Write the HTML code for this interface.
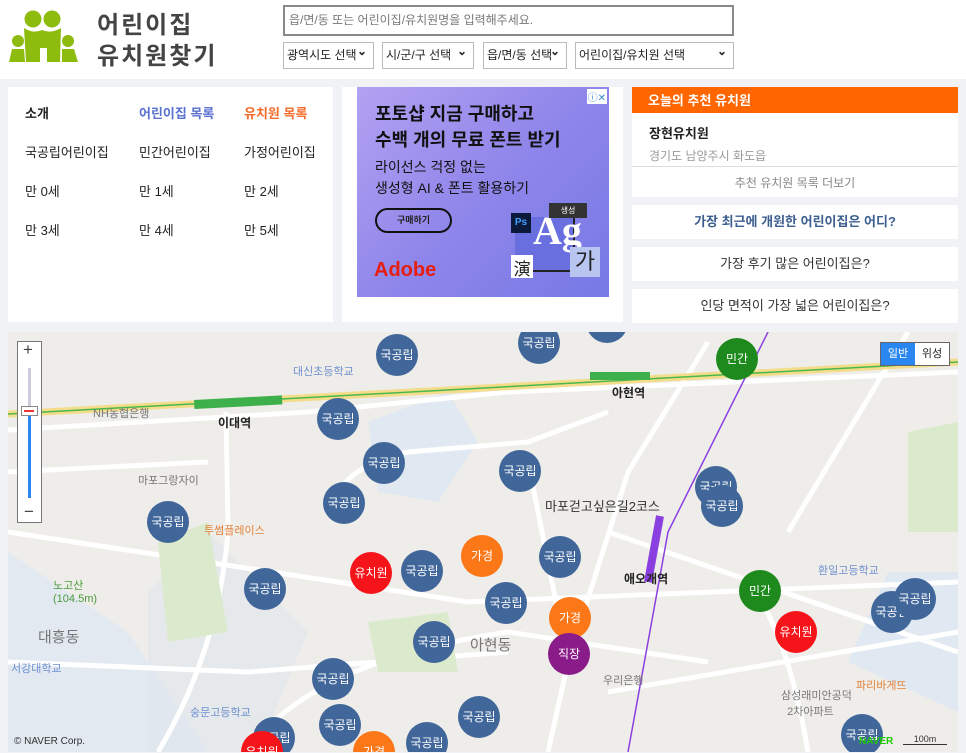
<!DOCTYPE html>
<html><head><meta charset="utf-8"><style>
*{margin:0;padding:0;box-sizing:border-box}
body{width:966px;height:753px;background:#f1f2f6;font-family:"Liberation Sans","Noto Sans CJK KR",sans-serif;position:relative;overflow:hidden;color:#222}
.abs{position:absolute}
#hdr{left:0;top:0;width:966px;height:79px;background:#fff}
.title{left:97px;font-size:24px;font-weight:bold;color:#444;letter-spacing:2px}
.sel{top:42px;height:27px;border:1px solid #bbb;background:#fff;font-size:12px;line-height:25px;padding-left:3px;color:#222}
.sel:after{content:"⌄";position:absolute;right:6px;top:-4px;font-weight:bold}
.panel{background:#fff}
.m{position:absolute;font-size:13px;color:#222}
.btn{position:absolute;left:632px;width:326px;height:34px;background:#fff;font-size:13px;text-align:center;line-height:34px;color:#333}
.c{position:absolute;width:42px;height:42px;border-radius:50%;color:#fff;font-size:12px;text-align:center;line-height:42px;margin:-21px 0 0 -21px}
.b{background:#41679a}.r{background:#f5141a}.o{background:#fb7718}.p{background:#8a1c89}.g{background:#1e8a1e}
.lb{position:absolute;font-size:11px;color:#777}
</style></head><body>
<div id="hdr" class="abs"></div>
<svg class="abs" style="left:8px;top:8px" width="74" height="56" viewBox="8 8 74 56" fill="#8dbb0e">
<circle cx="33" cy="19" r="8.5"/><circle cx="52" cy="19" r="8.5"/>
<path d="M24 28 Q33 34 42 30 Q51 34 61 28 L60 62 L47 62 L47 48 L40 48 L40 62 L26 62 Z"/>
<circle cx="18" cy="41" r="6"/><circle cx="68" cy="41" r="6"/>
<path d="M12 49 L24 49 L25 62 L9 62 Z"/><path d="M62 49 L74 49 L78 62 L62 62 Z"/>
</svg>
<div class="abs title" style="top:5px">어린이집</div>
<div class="abs title" style="top:36px">유치원찾기</div>
<div class="abs" style="left:283px;top:5px;width:451px;height:31px;border:2px solid #888;background:#fff;font-size:12px;color:#777;line-height:27px;padding-left:4px">읍/면/동 또는 어린이집/유치원명을 입력해주세요.</div>
<div class="abs sel" style="left:283px;width:91px">광역시도 선택</div>
<div class="abs sel" style="left:382px;width:92px">시/군/구 선택</div>
<div class="abs sel" style="left:483px;width:84px">읍/면/동 선택</div>
<div class="abs sel" style="left:575px;width:159px">어린이집/유치원 선택</div>

<div class="abs panel" style="left:8px;top:87px;width:325px;height:235px"></div>
<div class="m" style="left:25px;top:103px;font-weight:bold">소개</div>
<div class="m" style="left:139px;top:103px;font-weight:bold;color:#5a72d0">어린이집 목록</div>
<div class="m" style="left:244px;top:103px;font-weight:bold;color:#f76b2a">유치원 목록</div>
<div class="m" style="left:25px;top:142px">국공립어린이집</div>
<div class="m" style="left:139px;top:142px">민간어린이집</div>
<div class="m" style="left:244px;top:142px">가정어린이집</div>
<div class="m" style="left:25px;top:181px">만 0세</div><div class="m" style="left:139px;top:181px">만 1세</div><div class="m" style="left:244px;top:181px">만 2세</div>
<div class="m" style="left:25px;top:220px">만 3세</div><div class="m" style="left:139px;top:220px">만 4세</div><div class="m" style="left:244px;top:220px">만 5세</div>

<div class="abs panel" style="left:342px;top:87px;width:281px;height:235px"></div>
<div class="abs" style="left:357px;top:87px;width:252px;height:210px;background:linear-gradient(135deg,#b3a2f2,#8f86ea 50%,#7779e6);overflow:hidden">
<div class="abs" style="left:18px;top:14px;font-size:18px;font-weight:bold;line-height:26px;color:#111">포토샵 지금 구매하고<br>수백 개의 무료 폰트 받기</div>
<div class="abs" style="left:18px;top:70px;font-size:14px;line-height:21px;color:#111">라이선스 걱정 없는<br>생성형 AI &amp; 폰트 활용하기</div>
<div class="abs" style="left:18px;top:121px;width:77px;height:25px;border:2px solid #111;border-radius:13px;font-size:9px;font-weight:bold;text-align:center;line-height:21px">구매하기</div>
<div class="abs" style="left:17px;top:172px;font-size:20px;font-weight:bold;color:#e61e10">Adobe</div>
<div class="abs" style="left:158px;top:130px;width:60px;height:55px;background:#6a6fe0;border-right:2px solid #222;border-bottom:2px solid #222"></div>
<div class="abs" style="left:176px;top:120px;font-family:'Liberation Serif';font-size:40px;font-weight:bold;color:#fff">Ag</div>
<div class="abs" style="left:154px;top:126px;width:20px;height:20px;background:#0b1a3a;color:#3fa0ff;font-size:10px;font-weight:bold;text-align:center;line-height:20px">Ps</div>
<div class="abs" style="left:192px;top:116px;width:38px;height:15px;background:#333;color:#fff;font-size:8px;text-align:center;line-height:15px">생성</div>
<div class="abs" style="left:154px;top:168px;width:22px;height:23px;background:#fff;font-size:17px;text-align:center">演</div>
<div class="abs" style="left:213px;top:160px;width:30px;height:30px;background:#b8c5f0;font-size:22px;text-align:center;line-height:30px">가</div>
<div class="abs" style="right:2px;top:2px;font-size:10px;color:#3a8bd8;background:#fff;padding:0 1px">ⓘ✕</div>
</div>

<div class="abs" style="left:632px;top:87px;width:326px;height:26px;background:#ff6600;color:#fff;font-size:13px;font-weight:bold;line-height:28px;padding-left:16px">오늘의 추천 유치원</div>
<div class="abs panel" style="left:632px;top:113px;width:326px;height:54px;border-bottom:1px solid #ddd"></div>
<div class="m" style="left:649px;top:123px;font-weight:bold">장현유치원</div>
<div class="m" style="left:649px;top:147px;font-size:12px;color:#999">경기도 남양주시 화도읍</div>
<div class="btn" style="top:167px;height:30px;line-height:32px;font-size:12px;color:#888">추천 유치원 목록 더보기</div>
<div class="btn" style="top:205px;color:#3d5f8f;font-weight:bold">가장 최근에 개원한 어린이집은 어디?</div>
<div class="btn" style="top:247px">가장 후기 많은 어린이집은?</div>
<div class="btn" style="top:289px">인당 면적이 가장 넓은 어린이집은?</div>

<div class="abs" style="left:8px;top:332px;width:950px;height:420px;background:#f0eeeb;overflow:hidden">
<svg class="abs" style="left:0;top:0" width="950" height="420">
<rect x="0" y="0" width="950" height="420" fill="#efede9"/>
<path d="M0 220 Q60 260 120 300 L200 420 L0 420 Z" fill="#e2e9f1"/>
<path d="M140 260 L200 200 L300 300 L250 420 L140 420Z" fill="#e0e6ee" opacity=".6"/>
<path d="M360 90 L440 60 L470 110 L430 170 L370 160Z" fill="#e0e8f1"/>
<path d="M1000 240 L880 240 L840 330 L950 380Z" fill="#e0e8f1"/>
<g stroke="#fff" fill="none" stroke-width="5">
<path d="M0 82 L950 30"/><path d="M0 98 L300 80 Q400 70 500 60 L950 40"/>
<path d="M218 80 L220 200 Q210 320 150 420"/><path d="M0 200 L330 250 L460 270 L950 250"/>
<path d="M330 160 Q350 130 400 120 L520 110 L600 80"/><path d="M520 130 L560 330 L540 420"/>
<path d="M700 10 L620 140 L560 330"/><path d="M0 330 L240 340 L500 320"/>
<path d="M600 200 L950 320"/><path d="M740 250 Q780 300 800 420"/><path d="M900 0 L780 200"/>
<path d="M240 420 Q300 330 500 300 L700 330"/><path d="M0 140 L200 130"/><path d="M600 360 L950 300"/>
</g>
<g fill="#dbe9cd"><path d="M150 210 L200 190 L220 300 L160 310Z"/><path d="M360 290 L440 280 L450 340 L370 340Z"/><path d="M900 100 L950 90 L950 200 L900 200Z"/></g>
<path d="M0 82 L950 30" stroke="#f3dc8a" stroke-width="7"/>
<path d="M0 82 L950 30" stroke="#4bb84b" stroke-width="1.5"/>
<rect x="186" y="68" width="88" height="9" fill="#3db04b" transform="rotate(-3 186 68)"/>
<rect x="582" y="40" width="60" height="8" fill="#3db04b"/>
<path d="M620 420 L660 200 L760 0" stroke="#8a3fe0" stroke-width="1.5" fill="none"/>
<path d="M652 184 L640 250" stroke="#8a3fe0" stroke-width="8"/>
</svg>
<div class="lb" style="left:210px;top:82px;color:#222;font-size:12px;font-weight:bold">이대역</div>
<div class="lb" style="left:604px;top:52px;color:#222;font-size:12px;font-weight:bold">아현역</div>
<div class="lb" style="left:616px;top:238px;color:#222;font-size:12px;font-weight:bold">애오개역</div>
<div class="lb" style="left:537px;top:164px;color:#333;font-size:13px">마포걷고싶은길2코스</div>
<div class="lb" style="left:30px;top:294px;font-size:15px">대흥동</div>
<div class="lb" style="left:462px;top:302px;font-size:15px">아현동</div>
<div class="lb" style="left:285px;top:31px;color:#6d8fd0">대신초등학교</div>
<div class="lb" style="left:85px;top:73px">NH농협은행</div>
<div class="lb" style="left:130px;top:140px">마포그랑자이</div>
<div class="lb" style="left:196px;top:190px;color:#e0823a">투썸플레이스</div>
<div class="lb" style="left:45px;top:245px;color:#4a9a3a">노고산<br>(104.5m)</div>
<div class="lb" style="left:3px;top:328px;color:#6d8fd0">서강대학교</div>
<div class="lb" style="left:182px;top:372px;color:#6d8fd0">숭문고등학교</div>
<div class="lb" style="left:595px;top:340px">우리은행</div>
<div class="lb" style="left:773px;top:355px">삼성래미안공덕<br>&nbsp;&nbsp;2차아파트</div>
<div class="lb" style="left:810px;top:230px;color:#6d8fd0">환일고등학교</div>
<div class="lb" style="left:848px;top:345px;color:#e0823a">파리바게뜨</div>

<div class="abs" style="left:-8px;top:-332px;width:966px;height:753px">
<div class="c b" style="left:607px;top:322px"></div>
<div class="c b" style="left:397px;top:355px">국공립</div><div class="c b" style="left:539px;top:343px">국공립</div>
<div class="c b" style="left:338px;top:419px">국공립</div><div class="c b" style="left:384px;top:463px">국공립</div>
<div class="c b" style="left:520px;top:471px">국공립</div><div class="c b" style="left:344px;top:503px">국공립</div>
<div class="c b" style="left:168px;top:522px">국공립</div><div class="c b" style="left:422px;top:571px">국공립</div>
<div class="c b" style="left:560px;top:557px">국공립</div><div class="c b" style="left:265px;top:589px">국공립</div>
<div class="c b" style="left:506px;top:603px">국공립</div><div class="c b" style="left:434px;top:642px">국공립</div>
<div class="c b" style="left:333px;top:679px">국공립</div><div class="c b" style="left:479px;top:717px">국공립</div>
<div class="c b" style="left:340px;top:725px">국공립</div><div class="c b" style="left:427px;top:743px">국공립</div>
<div class="c b" style="left:716px;top:487px">국공립</div><div class="c b" style="left:722px;top:506px">국공립</div>
<div class="c b" style="left:892px;top:612px">국공립</div><div class="c b" style="left:915px;top:599px">국공립</div>
<div class="c b" style="left:862px;top:735px">국공립</div><div class="c b" style="left:274px;top:738px">국공립</div>
<div class="c r" style="left:371px;top:573px">유치원</div><div class="c r" style="left:796px;top:632px">유치원</div><div class="c r" style="left:262px;top:752px">유치원</div>
<div class="c o" style="left:482px;top:556px">가경</div><div class="c o" style="left:570px;top:618px">가경</div><div class="c o" style="left:374px;top:752px">가경</div>
<div class="c p" style="left:569px;top:654px">직장</div>
<div class="c g" style="left:737px;top:359px">민간</div><div class="c g" style="left:760px;top:591px">민간</div>
</div>

<div class="lb" style="left:6px;top:404px;color:#333;font-size:10px">© NAVER Corp.</div>
<div class="lb" style="left:851px;top:404px;color:#1ec800;font-size:10px;font-weight:bold">NAVER</div>
<div class="lb" style="left:895px;top:402px;color:#333;font-size:9px;border-bottom:1px solid #333;width:44px;text-align:center">100m</div>
<div class="abs" style="left:9px;top:9px;width:25px;height:182px;background:#fff;border:1px solid #777"></div>
<div class="lb" style="left:15px;top:8px;font-size:17px;color:#444">+</div>
<div class="abs" style="left:20px;top:36px;width:3px;height:130px;background:#ccd"></div>
<div class="abs" style="left:20px;top:80px;width:3px;height:86px;background:#2a86f0"></div>
<div class="abs" style="left:13px;top:74px;width:17px;height:10px;background:#fff;border:1px solid #888"></div>
<div class="abs" style="left:16px;top:78px;width:10px;height:2px;background:#e33"></div>
<div class="lb" style="left:16px;top:170px;font-size:17px;color:#444">−</div>
<div class="abs" style="left:872px;top:10px;width:70px;height:24px;border:1px solid #666;background:#fff;font-size:11px">
<div class="abs" style="left:0;top:0;width:34px;height:22px;background:#2a86f0;color:#fff;text-align:center;line-height:22px">일반</div>
<div class="abs" style="left:34px;top:0;width:34px;text-align:center;line-height:22px">위성</div></div>
</div>
</body></html>
